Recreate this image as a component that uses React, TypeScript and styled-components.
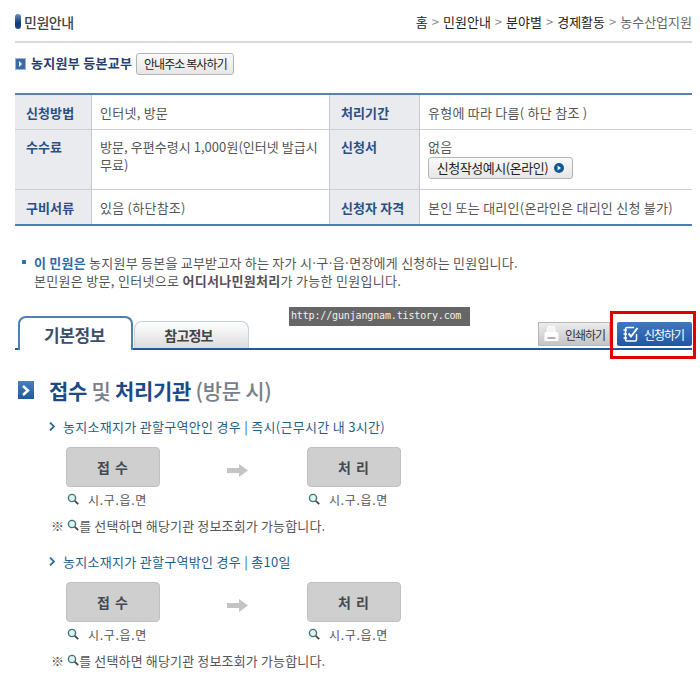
import React from "react";
import styled, { createGlobalStyle } from "styled-components";

const GlobalStyle = createGlobalStyle`
  html, body {
    margin: 0;
    padding: 0;
    background: #fff;
  }
  body {
    font-family: "Noto Sans CJK KR", "Noto Sans", sans-serif;
    font-size: 13px;
    color: #555;
  }
`;

const Page = styled.div`
  position: relative;
  width: 700px;
  height: 685px;
  overflow: hidden;
  padding: 0 8px 0 15px;
  box-sizing: border-box;
`;

const TopBar = styled.div`
  height: 43px;
  display: flex;
  justify-content: space-between;
  align-items: center;
  padding-top: 2px;
  box-sizing: border-box;
  border-bottom: 2px solid #d9d9d9;
`;

const PageTitle = styled.div`
  display: flex;
  align-items: center;
  gap: 3px;
  font-size: 14px;
  font-weight: 500;
  color: #444;
  letter-spacing: -0.5px;
`;

const TitlePill = styled.span`
  width: 6px;
  height: 15px;
  border-radius: 3px;
  background: linear-gradient(#6d8fb8, #0f3c78 60%, #1c4a86);
`;

const Crumbs = styled.div`
  display: flex;
  gap: 4px;
  font-size: 13px;
  color: #222;
`;

const CrumbSep = styled.span`
  color: #888;
`;

const CrumbLast = styled.span`
  color: #666;
`;

const SubHeader = styled.div`
  height: 41px;
  display: flex;
  align-items: center;
  gap: 4px;
  margin-bottom: 9px;
`;

const SubTitle = styled.strong`
  font-size: 13px;
  font-weight: 700;
  letter-spacing: 0.3px;
  color: #27406f;
  margin-left: 1px;
  position: relative;
  top: -1px;
`;

const BlockIcon = styled.span`
  width: 9px;
  height: 10px;
  background: #3b6aa8;
  border: 1px solid #9bb5d4;
  color: #fff;
  display: inline-flex;
  align-items: center;
  justify-content: center;
`;

const GreyButton = styled.span`
  display: inline-flex;
  align-items: center;
  justify-content: center;
  gap: 6px;
  box-sizing: border-box;
  border: 1px solid #b4b4b4;
  border-radius: 3px;
  background: linear-gradient(#fafafa, #e6e6e6);
  color: #222;
`;

const CopyButton = styled(GreyButton)`
  width: 98px;
  height: 22px;
  font-size: 12px;
  letter-spacing: -0.9px;
`;

const ExampleButton = styled(GreyButton)`
  width: 145px;
  height: 22px;
  margin-top: 1px;
  font-size: 13px;
  letter-spacing: -0.45px;
`;

const InfoTable = styled.div`
  display: grid;
  grid-template-columns: 77px 237px 91px 272px;
  grid-template-rows: 34px 60px 35px;
  border-top: 2px solid #5c82a8;
  border-bottom: 2px solid #4f7cae;
`;

const Th = styled.div<{ $second?: boolean; $sep?: boolean; $tall?: boolean }>`
  background: #e9ebee;
  color: #2a4f85;
  font-weight: 700;
  font-size: 13px;
  letter-spacing: 0.1px;
  line-height: 18px;
  padding: ${(p) => (p.$tall ? "8px" : "9px")} 0 0 11px;
  box-sizing: border-box;
  border-left: ${(p) => (p.$second ? "1px solid #c8c8c8" : "none")};
  border-right: 1px solid #c8c8c8;
  border-top: ${(p) => (p.$sep ? "1px solid #cfcfcf" : "none")};
`;

const Td = styled.div<{ $sep?: boolean; $tall?: boolean; $tight?: boolean }>`
  padding: ${(p) => (p.$tall ? "8px" : "9px")} 6px 0 8px;
  box-sizing: border-box;
  font-size: 13px;
  letter-spacing: ${(p) => (p.$tight ? "0.05px" : "0.25px")};
  line-height: 18px;
  color: #555;
  border-top: ${(p) => (p.$sep ? "1px solid #cfcfcf" : "none")};
`;

const Notice = styled.div`
  margin: 28px 0 0 4px;
  position: relative;
  padding-left: 15px;
  line-height: 18px;
  font-size: 13px;
  color: #555;
  &::before {
    content: "";
    position: absolute;
    left: 3px;
    top: 6px;
    width: 4px;
    height: 4px;
    background: #2f74b5;
  }
`;

const NoticeLine = styled.div<{ $spacing: number }>`
  letter-spacing: ${(p) => p.$spacing}px;
  white-space: nowrap;
`;

const NoticeDots = styled.span`
  letter-spacing: -1.4px;
`;

const NoticeLead = styled.strong`
  color: #2c6aa8;
  font-weight: 700;
`;

const NoticeStrong = styled.strong`
  color: #55505a;
  font-weight: 700;
`;

const TabBar = styled.div`
  margin-top: 25px;
  height: 33px;
  display: flex;
  align-items: flex-end;
  border-bottom: 2px solid #1f5aa0;
  padding-left: 3px;
`;

const ActiveTab = styled.div`
  width: 115px;
  height: 34px;
  box-sizing: border-box;
  border: 2px solid #4f7fb0;
  border-bottom: none;
  border-radius: 8px 8px 0 0;
  background: #fff;
  color: #3c4f68;
  font-size: 17px;
  font-weight: 700;
  letter-spacing: -0.4px;
  display: flex;
  align-items: center;
  justify-content: center;
  margin-bottom: -2px;
  padding-right: 2px;
`;

const PlainTab = styled.div`
  width: 115px;
  height: 27px;
  margin-left: 1px;
  box-sizing: border-box;
  border: 1px solid #c8d0da;
  border-bottom: none;
  border-radius: 8px 8px 0 0;
  background: linear-gradient(#fff, #dcdcdc);
  color: #444;
  font-size: 14px;
  font-weight: 700;
  letter-spacing: -0.8px;
  display: flex;
  align-items: center;
  justify-content: center;
  padding-right: 6px;
`;

const TabActions = styled.div`
  margin-left: auto;
  display: flex;
  gap: 7px;
  align-self: flex-start;
  margin-top: 7px;
`;

const PrintButton = styled.div`
  width: 72px;
  height: 24px;
  box-sizing: border-box;
  border: 1px solid #b5b5b5;
  background: linear-gradient(#ececec, #c4c4c4);
  color: #333;
  font-size: 12px;
  letter-spacing: -1px;
  white-space: nowrap;
  display: flex;
  align-items: center;
  gap: 6px;
  padding-left: 5px;
`;

const ApplyButton = styled.div`
  width: 75px;
  height: 24px;
  box-sizing: border-box;
  border-radius: 2px;
  background: linear-gradient(#3f78c2, #2257a0);
  color: #fff;
  font-size: 12px;
  letter-spacing: -1px;
  white-space: nowrap;
  display: flex;
  align-items: center;
  gap: 5px;
  padding-left: 6px;
`;

const Watermark = styled.div`
  position: absolute;
  left: 289px;
  top: 307px;
  width: 181px;
  height: 19px;
  background: #666;
  color: #f2f2f2;
  font-family: "DejaVu Sans Mono", "Liberation Mono", monospace;
  font-size: 10px;
  letter-spacing: -0.15px;
  line-height: 18px;
  padding-left: 2px;
  box-sizing: border-box;
  white-space: nowrap;
`;

const RedFrame = styled.div`
  position: absolute;
  left: 610px;
  top: 311px;
  width: 86px;
  height: 48px;
  box-sizing: border-box;
  border: 3px solid #e00000;
`;

const SectionTitle = styled.h2`
  margin: 26px 0 0 3px;
  display: flex;
  align-items: center;
  height: 28px;
  font-size: 21px;
  font-weight: 700;
  letter-spacing: -0.3px;
  color: #1c4a86;
  gap: 15px;
`;

const SectionIcon = styled.span`
  width: 16px;
  height: 18px;
  background: linear-gradient(#4a7ec0, #1f5aa0);
  display: inline-flex;
  align-items: center;
  justify-content: center;
`;

const TitleText = styled.span``;

const TitleMuted = styled.span`
  color: #77808c;
  font-weight: 500;
`;

const Flow = styled.section`
  padding-left: 34px;
  margin-top: 13px;
  & + & {
    margin-top: 18px;
  }
`;

const FlowHeading = styled.div`
  display: flex;
  align-items: center;
  gap: 8px;
  height: 18px;
  color: #1f6089;
  font-size: 13px;
  letter-spacing: 0.3px;
`;

const FlowSteps = styled.div`
  margin: 12px 0 0 17px;
  display: grid;
  grid-template-columns: 94px 147px 94px;
`;

const StepColumn = styled.div`
  display: flex;
  flex-direction: column;
`;

const StepBox = styled.div`
  height: 40px;
  border: 1px solid #c0c0c0;
  border-radius: 4px;
  background: #cfcfcf;
  box-sizing: border-box;
  display: flex;
  align-items: center;
  justify-content: center;
  color: #3f4a55;
  font-size: 14px;
  font-weight: 700;
  letter-spacing: 1px;
`;

const StepCaption = styled.div`
  margin-top: 3px;
  height: 18px;
  display: flex;
  align-items: center;
  gap: 9px;
  padding-left: 1px;
  color: #555;
  font-size: 12px;
  letter-spacing: 0.7px;
`;

const ArrowCell = styled.div`
  height: 40px;
  display: flex;
  align-items: center;
  justify-content: center;
  padding: 6px 0 0 8px;
  box-sizing: border-box;
`;

const FlowNote = styled.div`
  margin: 8px 0 0 2px;
  display: flex;
  align-items: center;
  gap: 3px;
  color: #555;
  font-size: 13px;
  letter-spacing: 0.15px;
  height: 18px;
  white-space: nowrap;
`;

const NoteTail = styled.span`
  margin-left: -3px;
`;

const Lens = () => (
  <svg width="12" height="12" viewBox="0 0 12 12">
    <circle cx="5" cy="5" r="3.6" fill="#dff3f3" stroke="#3f7676" strokeWidth="1.4" />
    <path d="M7.8 7.8 L11.2 11.2" stroke="#444" strokeWidth="1.8" />
  </svg>
);

const Chevron = () => (
  <svg width="6" height="9" viewBox="0 0 6 9">
    <path d="M1 0.5 L5 4.5 L1 8.5" fill="none" stroke="#2f6f96" strokeWidth="1.8" />
  </svg>
);

const Arrow = () => (
  <svg width="21" height="13" viewBox="0 0 21 13">
    <path d="M0 4 H12 V0 L21 6.5 L12 13 V9 H0 Z" fill="#c4c4c4" />
  </svg>
);

const steps = [
  { heading: "농지소재지가 관할구역안인 경우 | 즉시(근무시간 내 3시간)" },
  { heading: "농지소재지가 관할구역밖인 경우 | 총10일" },
];

export default function App() {
  return (
    <Page>
      <GlobalStyle />
      <TopBar>
        <PageTitle>
          <TitlePill />
          민원안내
        </PageTitle>
        <Crumbs>
          <span>홈</span>
          <CrumbSep>&gt;</CrumbSep>
          <span>민원안내</span>
          <CrumbSep>&gt;</CrumbSep>
          <span>분야별</span>
          <CrumbSep>&gt;</CrumbSep>
          <span>경제활동</span>
          <CrumbSep>&gt;</CrumbSep>
          <CrumbLast>농수산업지원</CrumbLast>
        </Crumbs>
      </TopBar>

      <SubHeader>
        <BlockIcon>
          <svg width="5" height="6" viewBox="0 0 5 6">
            <path d="M1 0 L4 3 L1 6 Z" fill="#fff" />
          </svg>
        </BlockIcon>
        <SubTitle>농지원부 등본교부</SubTitle>
        <CopyButton>안내주소 복사하기</CopyButton>
      </SubHeader>

      <InfoTable>
        <Th>신청방법</Th>
        <Td>인터넷, 방문</Td>
        <Th $second>처리기간</Th>
        <Td>유형에 따라 다름( 하단 참조 )</Td>
        <Th $sep $tall>수수료</Th>
        <Td $sep $tall $tight>
          방문, 우편수령시 1,000원(인터넷 발급시
          <br />
          무료)
        </Td>
        <Th $second $sep $tall>신청서</Th>
        <Td $sep $tall>
          없음
          <br />
          <ExampleButton>
            신청작성예시(온라인)
            <svg width="10" height="10" viewBox="0 0 10 10">
              <circle cx="5" cy="5" r="5" fill="#0f5a96" />
              <path d="M3.6 2.4 L7 5 L3.6 7.6 Z" fill="#fff" />
            </svg>
          </ExampleButton>
        </Td>
        <Th $sep>구비서류</Th>
        <Td $sep>있음 (하단참조)</Td>
        <Th $second $sep>신청자 자격</Th>
        <Td $sep>본인 또는 대리인(온라인은 대리인 신청 불가)</Td>
      </InfoTable>

      <Notice>
        <NoticeLine $spacing={0.23}>
          <NoticeLead>이 민원은</NoticeLead> 농지원부 등본을 교부받고자 하는 자가{" "}
          <NoticeDots>시·구·읍·</NoticeDots>면장에게 신청하는 민원입니다.
        </NoticeLine>
        <NoticeLine $spacing={0.3}>
          본민원은 방문, 인터넷으로 <NoticeStrong>어디서나민원처리</NoticeStrong>가 가능한 민원입니다.
        </NoticeLine>
      </Notice>

      <TabBar>
        <ActiveTab>기본정보</ActiveTab>
        <PlainTab>참고정보</PlainTab>
        <TabActions>
          <PrintButton>
            <svg width="15" height="18" viewBox="0 0 15 18">
              <path d="M4 1.5 H10.5 L11.5 8 H3 Z" fill="#f4f4f4" stroke="#fff" />
              <path d="M2 7 H13 Q14.5 7 14.5 9 V16 H0.5 V9 Q0.5 7 2 7 Z" fill="#fff" />
              <rect x="3.5" y="12" width="8" height="2" fill="#b0b0b0" />
            </svg>
            인쇄하기
          </PrintButton>
          <ApplyButton>
            <svg width="16" height="16" viewBox="0 0 16 16">
              <path d="M11 1.5 H4 Q2.5 1.5 2.5 3 V13.5 Q2.5 15 4 15 H12 Q13.5 15 13.5 13.5 V8" fill="none" stroke="#fff" strokeWidth="1.5" />
              <path d="M0.5 4 H4 M0.5 8 H4 M0.5 12 H4" stroke="#fff" strokeWidth="1.4" />
              <path d="M5.5 7.5 L8 10.5 L14.5 2" fill="none" stroke="#fff" strokeWidth="2" />
            </svg>
            신청하기
          </ApplyButton>
        </TabActions>
      </TabBar>

      <SectionTitle>
        <SectionIcon>
          <svg width="10" height="11" viewBox="0 0 10 11">
            <path d="M2 1 L7 5.5 L2 10" fill="none" stroke="#fff" strokeWidth="2.4" />
          </svg>
        </SectionIcon>
        <TitleText>
          접수 <TitleMuted>및</TitleMuted> 처리기관 <TitleMuted>(방문 시)</TitleMuted>
        </TitleText>
      </SectionTitle>

      {steps.map((s) => (
        <Flow key={s.heading}>
          <FlowHeading>
            <Chevron />
            {s.heading}
          </FlowHeading>
          <FlowSteps>
            <StepColumn>
              <StepBox>접 수</StepBox>
              <StepCaption>
                <Lens />
                시.구.읍.면
              </StepCaption>
            </StepColumn>
            <ArrowCell>
              <Arrow />
            </ArrowCell>
            <StepColumn>
              <StepBox>처 리</StepBox>
              <StepCaption>
                <Lens />
                시.구.읍.면
              </StepCaption>
            </StepColumn>
          </FlowSteps>
          <FlowNote>
            ※
            <Lens />
            <NoteTail>를 선택하면 해당기관 정보조회가 가능합니다.</NoteTail>
          </FlowNote>
        </Flow>
      ))}

      <Watermark>http://gunjangnam.tistory.com</Watermark>
      <RedFrame />
    </Page>
  );
}
